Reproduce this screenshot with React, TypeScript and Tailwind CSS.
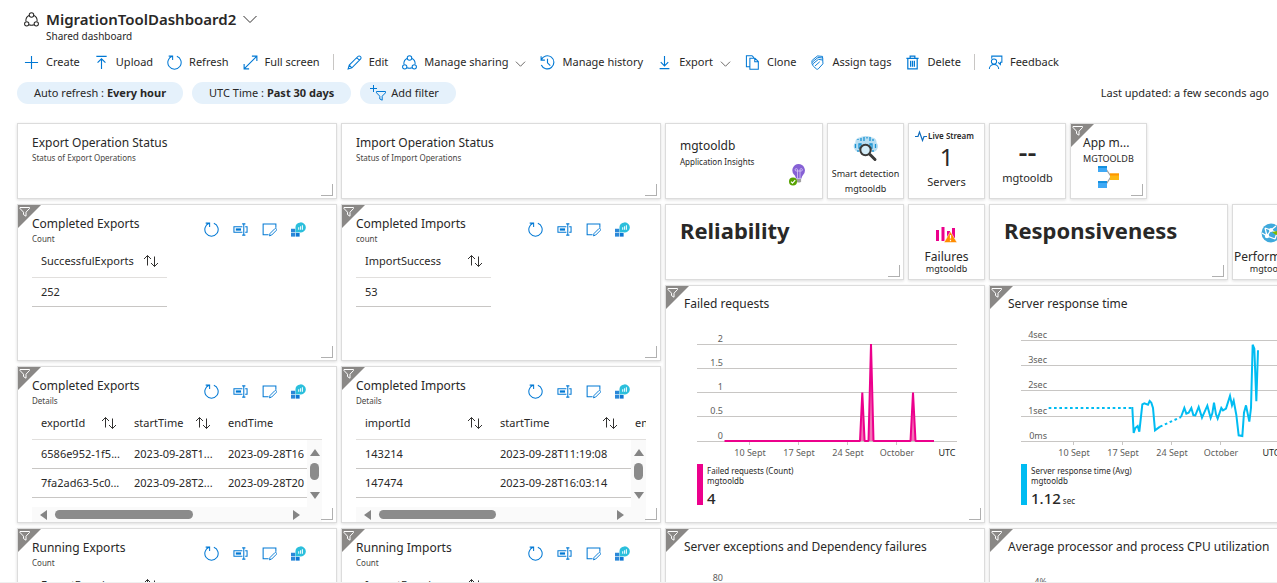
import React from "react";

type P = { children?: React.ReactNode };

const Svg = ({ size = 16, children, className = "" }: P & { size?: number; className?: string }) => (
  <svg
    width={size}
    height={size}
    viewBox="0 0 16 16"
    fill="none"
    stroke="currentColor"
    strokeWidth="1"
    className={"shrink-0 " + className}
    aria-hidden="true"
  >
    {children}
  </svg>
);

const Share = () => (
  <>
    <path d="M5.4 3.8C3 4.8 1.900 7 2 9.800M10.600 3.800c2.400 1 3.500 3.200 3.400 6M5.400 13.600c1.700.7 3.500.7 5.200 0" strokeWidth="1.100" />
    <circle cx="8" cy="3.200" r="2.400" strokeWidth="1.100" />
    <circle cx="2.900" cy="12.600" r="2.300" strokeWidth="1.100" />
    <circle cx="13.100" cy="12.600" r="2.300" strokeWidth="1.100" />
  </>
);
const Plus = () => <path d="M8 1v14M1 8h14" strokeWidth="1.2" />;
const Upload = () => <path d="M2.5 1.5h11M8 15V4M3.8 8.2 8 4l4.2 4.2" strokeWidth="1.2" />;
const Refresh = () => (
  <path d="M10.500 1.4A7.100 7.100 0 1 1 5.500 1.4M6 5.400V1.200H1.800" strokeWidth="1.1" />
);
const Expand = () => <path d="M1.2 14.8 14.8 1.2M9.5 1.2h5.3v5.3M1.2 9.5v5.3h5.3" strokeWidth="1.2" />;
const Pencil = () => (
  <path d="M1.2 14.8 2.4 10.8 11.6 1.6a1.9 1.9 0 0 1 2.8 2.8L5.2 13.6zM10.4 2.8l2.8 2.8M2.4 10.8l2.8 2.8" strokeWidth="1.1" />
);
const History = () => (
  <>
    <path d="M1.4 5A7 7 0 1 1 1.4 10.6M1.2 1.4V5.4H5.2" strokeWidth="1.2" />
    <path d="M8 4v4.4l3 3" strokeWidth="1.2" />
  </>
);
const Download = () => <path d="M8 1v10.5M4 7.6l4 4 4-4M2.8 14.5h10.4" strokeWidth="1.2" />;
const Clone = () => (
  <path d="M5 12.5H1.5V.8h6l2 2M5.2 3.4h5.4l3.6 3.6v8.2h-9zM10.4 3.6v3.6h3.6" strokeWidth="1.1" />
);
const Tags = () => (
  <>
    <path d="M3.400 9.200 9 4.600l4.600.8.2 4-5 5.400c-.6.6-1.300.6-1.900.1l-3.300-2.900c-.8-.8-.9-2-.2-2.800z" />
    <path d="M2.600 10.400C1.700 9 1.900 8 2.800 7.200L8.600 2.600l5 .6v2.200M2.400 8C1.600 6.600 2 5.800 2.800 5.200L8 1l5.400.5v1.700" />
    <path d="M5.400 11.600 10.400 7.200" />
  </>
);
const Trash = () => (
  <path d="M1.5 3.5h13M5.5 3.2V1.2h5v2M3 3.5h10v11.3H3zM6 6v6.5M8 6v6.5M10 6v6.5" strokeWidth="1.3" />
);
const Feedback = () => (
  <>
    <path d="M4 4V1.2h10.8v6.6h-1.6v2.4l-2.4-2.4" strokeWidth="1.1" />
    <circle cx="6.4" cy="7" r="2.8" strokeWidth="1.1" />
    <path d="M1.4 15a5 5 0 0 1 10 0" strokeWidth="1.1" />
  </>
);
const Rename = () => (
  <>
    <path d="M10 5H1v6h9M13 5h2v6h-2M9.8 2h3.4M9.8 14h3.4M11.5 2v12" strokeWidth="1.1" />
    <path d="M3 8h5.6" strokeWidth="2.4" />
  </>
);
const EditBox = () => (
  <>
    <path d="M7 13.6H1.2V2.2h13.6v4" strokeWidth="1.1" />
    <path d="m8 14.8.6-2.6 5-5a1.1 1.1 0 0 1 1.7 1.7l-5 5z" />
  </>
);
const Insights = () => (
  <g stroke="none">
    <path d="M0 7.200h4.600v3.800H0z" fill="#2b88d8" />
    <path d="M0 11.600h4.600v4H0z" fill="#2b88d8" />
    <path d="M5.200 11.600h4v4h-4z" fill="#0f78d4" />
    <path d="M10 .4a5.400 5.400 0 1 1-1 10.600L4.800 11.200V6.400A5.400 5.400 0 0 1 10 .4z" fill="#2bbfdc" />
    <path d="M7.600 5.600h1.200v2.600H7.600zM9.600 4.600h1.200v3.600H9.600zM11.600 3.400h1.200v4.800h-1.200z" fill="#e6f8fc" />
  </g>
);
const Chevron = () => (
  <svg width="11" height="11" viewBox="0 0 12 12" fill="none" stroke="#605e5c" className="mt-[2px]" aria-hidden="true">
    <path d="m1 4 5 5 5-5" />
  </svg>
);

const Tool = ({ icon, label, menu }: { icon: React.ReactNode; label: string; menu?: boolean }) => (
  <button type="button" className="flex items-center gap-[7px] whitespace-nowrap">
    <Svg className="text-[#0078d4]" size={15}>{icon}</Svg>
    <span>{label}</span>
    {menu && <Chevron />}
  </button>
);

const Separator = () => <span className="-mx-px h-4 w-px bg-[#c8c6c4]" />;

const Pill = ({ children, className = "px-[17px]" }: P & { className?: string }) => (
  <button type="button" className={"flex h-[22px] items-center rounded-full bg-[#e5f1fb] whitespace-nowrap " + className}>
    {children}
  </button>
);

const Card = ({ children, className, filter, grip }: P & { className: string; filter?: boolean; grip?: boolean }) => (
  <section className={"relative flex flex-col border border-[#dcdcdc] bg-white shadow-[0_1px_3px_rgba(0,0,0,0.14)] " + className}>
    {filter && (
      <svg width="23" height="23" viewBox="0 0 23 23" className="absolute top-0 left-0" aria-hidden="true">
        <path d="M0 0h23L0 23z" fill="#8a8886" />
        <path d="M2 2.500h9.500v1L8 7.200v4L5.500 9.600V7.200L2 3.500z" fill="none" stroke="#fff" />
      </svg>
    )}
    {children}
    {grip && <span className="absolute right-[3px] bottom-[2px] size-3 border-r border-b border-[#b0b0b0]" />}
  </section>
);

const Heading = ({ title, sub, actions }: { title: string; sub: string; actions?: boolean }) => (
  <header className="flex justify-between pt-[10px] pr-[30px] pl-[14px]">
    <div>
      <h2 className="text-xs leading-[18px]">{title}</h2>
      <p className="text-[8px] leading-[12px] text-[#484644]">{sub}</p>
    </div>
    {actions && (
      <div className="flex h-7 items-center gap-[14px] text-[#0078d4]">
        <button type="button" aria-label="Refresh"><Svg size={15}><Refresh /></Svg></button>
        <button type="button" aria-label="Rename"><Svg size={15}><Rename /></Svg></button>
        <button type="button" aria-label="Edit query"><Svg size={15}><EditBox /></Svg></button>
        <button type="button" aria-label="Open in logs"><Svg size={15}><Insights /></Svg></button>
      </div>
    )}
  </header>
);

const Sort = () => (
  <svg width="16" height="14" viewBox="0 0 16 14" fill="none" stroke="#323130" aria-hidden="true">
    <path d="M4.500 11.500v-10M1 5l3.500-3.500L8 5M11.500 2.500v10M8 9l3.500 3.500L15 9" />
  </svg>
);

const HeadCell = ({ label, width, sort = true }: { label: string; width: string; sort?: boolean }) => (
  <th scope="col" className={"h-8 border-b border-[#e1dfdd] pt-0 pr-2 pb-px pl-[9px] font-normal " + width}>
    <span className="flex items-center justify-between">
      {label}
      {sort && <Sort />}
    </span>
  </th>
);

const CountTable = ({ name, value }: { name: string; value: string }) => (
  <div className="pt-[1px] pl-[14px]">
    <table className="w-[135px] table-fixed border-separate border-spacing-0 text-left">
      <thead>
        <tr><HeadCell label={name} width="w-[135px]" /></tr>
      </thead>
      <tbody>
        <tr><td className="h-[29px] border-b border-[#c8c6c4] pt-px pb-0 pl-[9px]">{value}</td></tr>
      </tbody>
    </table>
  </div>
);

type Details = { heads: string[]; rows: string[][]; widths: string[]; table: string; thumb: string };

const Arrow = ({ d, label }: { d: string; label: string }) => (
  <button type="button" aria-label={label}>
    <svg width="10" height="10" viewBox="0 0 10 10" fill="#858585" className="block"><path d={d} /></svg>
  </button>
);

const DetailTable = ({ heads, rows, widths, table, thumb }: Details) => (
  <div className="mr-[14px] ml-[14px] flex flex-1 flex-col overflow-hidden pt-[1px]">
    <div className="relative flex-1 overflow-hidden">
      <table className={"table-fixed border-separate border-spacing-0 text-left " + table}>
        <thead>
          <tr>{heads.map((h, i) => <HeadCell key={h} label={h} width={widths[i]} sort={i < 2} />)}</tr>
        </thead>
        <tbody>
          {rows.map((r) => (
            <tr key={r[0]}>
              {r.map((c, i) => (
                <td key={i} className="h-[29px] border-b border-[#c8c6c4] pt-px pb-0 pl-[9px] whitespace-nowrap">{c}</td>
              ))}
            </tr>
          ))}
        </tbody>
      </table>
      <div className="absolute top-8 right-0 bottom-0 flex w-[15px] flex-col items-center bg-[#fafafa] pt-[7px]">
        <Arrow label="Scroll up" d="M0 9 5 2l5 7z" />
        <span className="mt-[6px] h-[17px] w-[9px] rounded-full bg-[#8b8b8b]" />
        <span className="mt-[10px] flex"><Arrow label="Scroll down" d="M0 2h10L5 9z" /></span>
      </div>
    </div>
    <div className="flex h-[15px] items-center bg-[#fafafa] pl-[6px]">
      <Arrow label="Scroll left" d="M9 0v10L2 5z" />
      <span className={"ml-[7px] h-[9px] rounded-full bg-[#8b8b8b] " + thumb} />
      <span className="mr-[21px] ml-auto flex"><Arrow label="Scroll right" d="M2 0v10l7-5z" /></span>
    </div>
  </div>
);

const Axis = ({ lines, labels }: { lines: number[]; labels: string[] }) => (
  <>
    {lines.map((y, i) => (
      <g key={y}>
        <path d={`M31 ${y}H291`} stroke="#c8c6c4" />
        <text x="57" y={y - 2.5} textAnchor="end">{labels[i]}</text>
      </g>
    ))}
    {["10 Sept", "17 Sept", "24 Sept", "October"].map((t, i) => (
      <g key={t}>
        <path d={`M${83.5 + 49 * i} 115v4`} stroke="#c8c6c4" />
        <text x={84 + 49 * i} y="130" textAnchor="middle">{t}</text>
      </g>
    ))}
    <text x="281" y="130" textAnchor="middle" fill="#201f1e">UTC</text>
  </>
);

const Chart = ({ children, label }: P & { label: string }) => (
  <svg width="318" height="135" viewBox="0 0 318 135" fill="#605e5c" className="mt-[13px] shrink-0 text-[9px]" role="img" aria-label={label}>
    {children}
  </svg>
);

const ChartTitle = ({ children }: P) => <h2 className="pt-[9px] pl-[18px] text-xs leading-[18px] whitespace-nowrap">{children}</h2>;

const Legend = ({ color, name, value, unit }: { color: string; name: string; value: string; unit?: string }) => (
  <div className="mt-[3px] ml-[31px] flex gap-1">
    <span className={"h-[41px] w-[6px] " + color} />
    <div className="text-[8px] leading-[10px]">
      <p className="pt-[2px]">{name}</p>
      <p>mgtooldb</p>
      <p className="text-[15px] leading-6 font-medium">
        {value}
        {unit && <span className="ml-[2px] text-[8px] font-normal">{unit}</span>}
      </p>
    </div>
  </div>
);

export default function App() {
  return (
    <div className="flex h-screen flex-col overflow-hidden border-b border-[#f0f0f0] bg-white font-['Noto_Sans','Open_Sans',sans-serif] text-[11px] text-[#292827]">
      <header className="pt-[9px] pl-6">
        <div className="flex items-center gap-[7px]">
          <Svg size={15}><Share /></Svg>
          <h1 className="text-[15px] leading-5 font-semibold">MigrationToolDashboard2</h1>
          <button type="button" aria-label="Switch dashboard">
            <svg width="14" height="14" viewBox="0 0 14 14" fill="none" stroke="#323130" className="block"><path d="m.5 4 6.500 6.500L13.500 4" /></svg>
          </button>
        </div>
        <p className="pl-[22px] text-[10px] leading-[14px]">Shared dashboard</p>
      </header>
      <nav className="flex items-center gap-[14px] pt-[10px] pl-6 leading-[18px]">
        <Tool icon={<Plus />} label="Create" />
        <Tool icon={<Upload />} label="Upload" />
        <Tool icon={<Refresh />} label="Refresh" />
        <Tool icon={<Expand />} label="Full screen" />
        <Separator />
        <Tool icon={<Pencil />} label="Edit" />
        <Tool icon={<Share />} label="Manage sharing" menu />
        <Tool icon={<History />} label="Manage history" />
        <Tool icon={<Download />} label="Export" menu />
        <Tool icon={<Clone />} label="Clone" />
        <Tool icon={<Tags />} label="Assign tags" />
        <Tool icon={<Trash />} label="Delete" />
        <Separator />
        <Tool icon={<Feedback />} label="Feedback" />
      </nav>
      <div className="flex items-center gap-[9px] pt-[11px] pr-2 pl-[17px]">
        <Pill><span>Auto refresh : <b className="font-bold">Every hour</b></span></Pill>
        <Pill><span>UTC Time : <b className="font-bold">Past 30 days</b></span></Pill>
        <Pill className="gap-[5px] pr-[17px] pl-[10px]">
          <svg width="16" height="16" viewBox="0 0 16 16" fill="none" stroke="#0078d4" aria-hidden="true">
            <path d="M3.500 0v7M0 3.500h7M6.500 6.500h9v1.300l-3.300 3.400v4L9.800 14v-2.800L6.500 7.800z" />
          </svg>
          Add filter
        </Pill>
        <p className="ml-auto pt-px">Last updated: a few seconds ago</p>
      </div>
      <main className="mt-[13px] flex-1 overflow-hidden pt-[6px] pl-[17px]">
        <div className="grid auto-rows-[76px] grid-cols-[repeat(16,77px)] gap-x-1 gap-y-[5px]">
          <Card className="col-start-1 col-end-5 row-start-1 row-end-2" grip>
            <Heading title="Export Operation Status" sub="Status of Export Operations" />
          </Card>
          <Card className="col-start-5 col-end-9 row-start-1 row-end-2" grip>
            <Heading title="Import Operation Status" sub="Status of Import Operations" />
          </Card>
          <Card className="col-start-1 col-end-5 row-start-2 row-end-4" filter grip>
            <Heading title="Completed Exports" sub="Count" actions />
            <CountTable name="SuccessfulExports" value="252" />
          </Card>
          <Card className="col-start-5 col-end-9 row-start-2 row-end-4" filter grip>
            <Heading title="Completed Imports" sub="count" actions />
            <CountTable name="ImportSuccess" value="53" />
          </Card>
          <Card className="col-start-1 col-end-5 row-start-4 row-end-6" filter grip>
            <Heading title="Completed Exports" sub="Details" actions />
            <DetailTable
              heads={["exportId", "startTime", "endTime"]}
              rows={[["6586e952-1f5...", "2023-09-28T1...", "2023-09-28T16"], ["7fa2ad63-5c0...", "2023-09-28T2...", "2023-09-28T20"]]}
              widths={["w-[93px]", "w-[94px]", "w-[135px]"]}
              table="w-[322px]"
              thumb="w-[138px]"
            />
          </Card>
          <Card className="col-start-5 col-end-9 row-start-4 row-end-6" filter grip>
            <Heading title="Completed Imports" sub="Details" actions />
            <DetailTable
              heads={["importId", "startTime", "endTime"]}
              rows={[["143214", "2023-09-28T11:19:08", ""], ["147474", "2023-09-28T16:03:14", ""]]}
              widths={["w-[135px]", "w-[135px]", "w-[135px]"]}
              table="w-[405px]"
              thumb="w-[117px]"
            />
          </Card>
          <Card className="col-start-1 col-end-5 row-start-6 row-end-8" filter grip>
            <Heading title="Running Exports" sub="Count" actions />
            <CountTable name="ExportRunning" value="0" />
          </Card>
          <Card className="col-start-5 col-end-9 row-start-6 row-end-8" filter grip>
            <Heading title="Running Imports" sub="Count" actions />
            <CountTable name="ImportRunning" value="0" />
          </Card>

          <Card className="col-start-9 col-end-11 row-start-1 row-end-2">
            <div className="pt-[13px] pl-[14px]">
              <h2 className="text-xs leading-[18px]">mgtooldb</h2>
              <p className="text-[8px] leading-[14px]">Application Insights</p>
            </div>
            <svg width="18" height="24" viewBox="0 0 18 24" className="absolute right-[16px] bottom-[11px]" aria-hidden="true">
              <path d="M10.500 1a6.400 6.400 0 0 1 4.900 10.500c-1 1.300-1.600 2.200-1.800 4H7.900C7.700 13.600 7 12.700 5.900 11.500A6.400 6.400 0 0 1 10.500 1z" fill="#8661d5" />
              <path d="M8.500 16h4.600v2.200l-1 1.200H9.500l-1-1.200z" fill="#a0a0a0" />
              <path d="M9.500 15V8M12 15V8M9.500 8H8.300a1.200 1.200 0 1 1 1.200-1.200zM12 8h1.200A1.200 1.200 0 1 0 12 6.800zM9.500 8H12" fill="none" stroke="#e3d5fa" strokeWidth=".7" />
              <circle cx="5" cy="18.500" r="4" fill="#57a300" />
              <path d="m3 18.600 1.500 1.500L7.200 17.200" fill="none" stroke="#fff" strokeWidth="1.200" />
            </svg>
          </Card>
          <Card className="col-start-11 col-end-12 row-start-1 row-end-2 items-center pt-[11px]">
            <svg width="26" height="28" viewBox="0 0 26 28" className="shrink-0" aria-hidden="true">
              <path d="M7 2.500C10 .5 16 .5 19 2.500c3 0 5 3 4.500 5 2 2 2 5 .5 7-1 2-3 2.500-5 2.500H7c-3 0-5-1-5.500-3-1.500-2-1-5 1-6.500C2 5 4 2.500 7 2.500z" fill="#b8def2" />
              <path d="M5 5v-1M8 3v3M11 2v4M14 3.500V2M17 2v4M20 4v2M2.500 9v4M6 9h2v4H6zM11 9v4M14 9v4M17 9h2v4h-2zM22.500 9v4M5 15v2M20 15v2" fill="none" stroke="#1b93d2" strokeWidth="1.300" />
              <circle cx="12.500" cy="15" r="5.200" fill="#d3ecf8" stroke="#3b3a39" strokeWidth="2" />
              <path d="m17 19.500 5 5" stroke="#3b3a39" strokeWidth="3" strokeLinecap="round" />
            </svg>
            <h2 className="text-[9px] leading-[22px] whitespace-nowrap">Smart detection</h2>
            <p className="text-[9px] leading-[8px]">mgtooldb</p>
          </Card>
          <Card className="col-start-12 col-end-13 row-start-1 row-end-2 items-center pt-[5px]">
            <h2 className="mr-1 flex items-center gap-[1px] text-[8px] leading-[14px] font-semibold whitespace-nowrap">
              <svg width="12" height="12" viewBox="0 0 12 12" fill="none" stroke="#0f6cbd" strokeWidth="1.200" aria-hidden="true">
                <path d="M0 6.500h3L4.500 2l3 8.500L9 6.500h3" />
              </svg>
              Live Stream
            </h2>
            <p className="text-2xl leading-7">1</p>
            <p className="text-[11px] leading-[22px]">Servers</p>
          </Card>
          <Card className="col-start-13 col-end-14 row-start-1 row-end-2 items-center pt-[15px]">
            <p className="text-[28px] leading-6 font-medium">--</p>
            <p className="pt-1 text-[11px] leading-[22px]">mgtooldb</p>
          </Card>
          <Card className="col-start-14 col-end-15 row-start-1 row-end-2 pt-[10px] pl-3" filter grip>
            <h2 className="text-xs leading-[18px]">App m...</h2>
            <p className="text-[9px] leading-[14px]">MGTOOLDB</p>
            <svg width="22" height="22" viewBox="0 0 22 22" className="ml-[14px]" aria-hidden="true">
              <path d="M9 3l5 7.500L9 18.500" fill="none" stroke="#a0a0a0" strokeWidth="1.200" />
              <path d="M1 0h9v6H1zM1 15h9v7H1z" fill="#3fa9f5" />
              <path d="M1 0h9v2H1zM1 15h9v2H1z" fill="#1490df" />
              <path d="M13 7.500h9v6.500h-9z" fill="#fdb813" />
              <path d="M13 7.500h9v2h-9z" fill="#ff9500" />
            </svg>
          </Card>
          <Card className="col-start-9 col-end-12 row-start-2 row-end-3 pt-2 pl-[14px]" grip>
            <h2 className="text-[22px] leading-[34px] font-bold">Reliability</h2>
          </Card>
          <Card className="col-start-12 col-end-13 row-start-2 row-end-3 items-center gap-[5px] pt-[21px]">
            <svg width="21" height="17" viewBox="0 0 21 17" aria-hidden="true">
              <path d="M0 4h3v11H0zM5.500 1h3v14h-3zM11 5h3v8h-3zM16 2h3v10h-3z" fill="#ec008c" />
              <path d="m14.500 5.500 6.500 11h-13z" fill="#ff8c00" stroke="#fff" strokeWidth=".5" />
              <path d="M14.500 9v3.600M14.500 13.800v1.400" stroke="#fff" strokeWidth="1.200" />
            </svg>
            <div className="text-center">
              <h2 className="text-xs leading-[18px]">Failures</h2>
              <p className="text-[9px] leading-[6px]">mgtooldb</p>
            </div>
          </Card>
          <Card className="col-start-13 col-end-16 row-start-2 row-end-3 pt-2 pl-[14px]" grip>
            <h2 className="text-[22px] leading-[34px] font-bold">Responsiveness</h2>
          </Card>
          <Card className="col-start-16 col-end-17 row-start-2 row-end-3 items-center gap-[5px] pt-[18px]">
            <svg width="20" height="20" viewBox="0 0 20 20" aria-hidden="true">
              <circle cx="10" cy="10" r="9.500" fill="#3fa9dc" />
              <path d="M4 5l6 2 5-4M10 7l-4 6 8 3M6 13l-5-3M10 7l6 3-2 6M4 5l2 8" fill="none" stroke="#fff" strokeWidth="1.300" />
              <circle cx="10" cy="7" r="2" fill="#fff" />
              <circle cx="6" cy="13" r="2.200" fill="#fff" />
              <path d="M11 9l9-2v4l-5 1z" fill="#7fba00" />
            </svg>
            <div className="text-center">
              <h2 className="text-xs leading-[18px]">Performance</h2>
              <p className="text-[9px] leading-[6px]">mgtooldb</p>
            </div>
          </Card>

          <Card className="col-start-9 col-end-13 row-start-3 row-end-6" filter grip>
            <ChartTitle>Failed requests</ChartTitle>
            <Chart label="Failed requests over time">
              <Axis lines={[18.5, 42.5, 66.5, 90.5, 115.5]} labels={["2", "1.5", "1", "0.5", "0"]} />
              <path
                d="M58.500 115H194L196.300 66.500 198.600 115H202.500L205 18 207.500 115H244.500L247 66.500 249.500 115H268"
                fill="#f472b6"
                stroke="#ec008c"
                strokeWidth="2"
                strokeLinejoin="bevel"
              />
            </Chart>
            <Legend color="bg-[#ec008c]" name="Failed requests (Count)" value="4" />
          </Card>
          <Card className="col-start-13 col-end-17 row-start-3 row-end-6" filter grip>
            <ChartTitle>Server response time</ChartTitle>
            <Chart label="Server response time over time">
              <Axis lines={[14.5, 39.5, 64.5, 90.5, 115.5]} labels={["4sec", "3sec", "2sec", "1sec", "0ms"]} />
              <g transform="translate(-10 -46) scale(.33333)" fill="none" stroke="#00bcf2" strokeWidth="6">
                <path d="M206 384H456M540 440 603 411" strokeDasharray="8 8" />
                <path d="M454 384h3L461 459 466 444 473 438 478 455 487 373 493 370 504 374 509 363 514 368 519 384 525 451 540 440" />
                <path d="M603 411 613 384 619 401 626 398 634 384 640 405 646 406 656 381 666 413 682 377 692 414 697 400 702 368 708 403 713 416 724 384 729 391 738 386 750 348 756 376 761 362 769 405 776 466 787 468 792 398 798 376 808 425 813 384 818 194 823 206 829 364 834 211" />
              </g>
            </Chart>
            <Legend color="bg-[#00bcf2]" name="Server response time (Avg)" value="1.12" unit="sec" />
          </Card>
          <Card className="col-start-9 col-end-13 row-start-6 row-end-9" filter grip>
            <ChartTitle>Server exceptions and Dependency failures</ChartTitle>
            <Chart label="Server exceptions and dependency failures over time">
              <Axis lines={[14.5, 39.5, 64.5, 90.5, 115.5]} labels={["80", "60", "40", "20", "0"]} />
            </Chart>
          </Card>
          <Card className="col-start-13 col-end-17 row-start-6 row-end-9" filter grip>
            <ChartTitle>Average processor and process CPU utilization</ChartTitle>
            <Chart label="Average processor and process CPU utilization over time">
              <Axis lines={[18.5, 42.5, 66.5, 90.5, 115.5]} labels={["4%", "3%", "2%", "1%", "0%"]} />
            </Chart>
          </Card>
        </div>
      </main>
    </div>
  );
}
